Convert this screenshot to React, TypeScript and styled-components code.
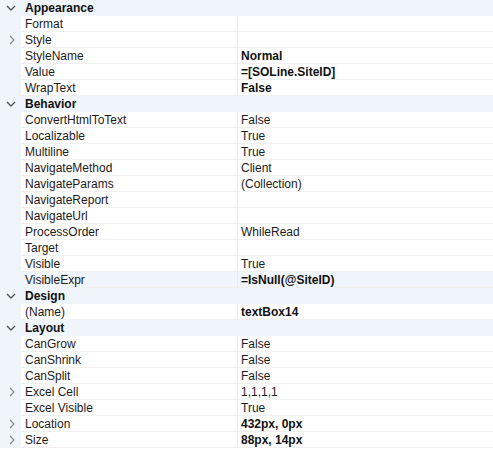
import styled, { createGlobalStyle } from "styled-components";

const GlobalStyle = createGlobalStyle`
  body {
    margin: 0;
    padding: 0;
    background: #ffffff;
    font-family: "Liberation Sans", Arial, sans-serif;
    font-size: 12px;
    color: #1b1b1b;
  }
`;

const Grid = styled.div`
  width: 493px;
  display: flex;
  flex-direction: column;
`;

const CategoryRow = styled.div`
  display: flex;
  align-items: center;
  height: 16px;
  background: #f0f4fb;
`;

const Gutter = styled.div`
  width: 21px;
  height: 16px;
  flex: none;
  display: flex;
  align-items: center;
  justify-content: center;
  background: #f0f4fb;
`;

const CategoryName = styled.div`
  padding-left: 4px;
  padding-top: 1px;
  font-weight: bold;
  line-height: 15px;
  color: #111;
`;

const PropRow = styled.div`
  display: flex;
  height: 16px;
`;

const Cell = styled.div<{ $selected?: boolean }>`
  box-sizing: border-box;
  height: 16px;
  padding-top: 1px;
  line-height: 14px;
  border-bottom: 1px solid #f0f0f0;
  white-space: nowrap;
  overflow: hidden;
  background: ${(p) => (p.$selected ? "#f0f4fb" : "#ffffff")};
`;

const NameCell = styled(Cell)`
  width: 217px;
  flex: none;
  padding-left: 4px;
  border-right: 1px solid #ebebeb;
`;

const ValueCell = styled(Cell)<{ $bold?: boolean }>`
  flex: 1;
  padding-left: 3px;
  font-weight: ${(p) => (p.$bold ? "bold" : "normal")};
  color: ${(p) => (p.$bold ? "#111" : "#1b1b1b")};
`;

const Down = () => (
  <svg width="10" height="6" viewBox="0 0 10 6">
    <path d="M1 1 L5 5 L9 1" fill="none" stroke="#555" strokeWidth="1.3" />
  </svg>
);

const Right = () => (
  <svg width="6" height="10" viewBox="0 0 6 10" style={{ marginLeft: 2 }}>
    <path d="M1 1 L5 5 L1 9" fill="none" stroke="#8a8a8a" strokeWidth="1.2" />
  </svg>
);

type Prop = {
  name: string;
  value?: string;
  bold?: boolean;
  expand?: boolean;
  selected?: boolean;
};

type Category = { title: string; props: Prop[] };

const data: Category[] = [
  {
    title: "Appearance",
    props: [
      { name: "Format" },
      { name: "Style", expand: true },
      { name: "StyleName", value: "Normal", bold: true },
      { name: "Value", value: "=[SOLine.SiteID]", bold: true },
      { name: "WrapText", value: "False", bold: true },
    ],
  },
  {
    title: "Behavior",
    props: [
      { name: "ConvertHtmlToText", value: "False" },
      { name: "Localizable", value: "True" },
      { name: "Multiline", value: "True" },
      { name: "NavigateMethod", value: "Client" },
      { name: "NavigateParams", value: "(Collection)" },
      { name: "NavigateReport" },
      { name: "NavigateUrl" },
      { name: "ProcessOrder", value: "WhileRead" },
      { name: "Target" },
      { name: "Visible", value: "True" },
      { name: "VisibleExpr", value: "=IsNull(@SiteID)", bold: true, selected: true },
    ],
  },
  {
    title: "Design",
    props: [{ name: "(Name)", value: "textBox14", bold: true }],
  },
  {
    title: "Layout",
    props: [
      { name: "CanGrow", value: "False" },
      { name: "CanShrink", value: "False" },
      { name: "CanSplit", value: "False" },
      { name: "Excel Cell", value: "1,1,1,1", expand: true },
      { name: "Excel Visible", value: "True" },
      { name: "Location", value: "432px, 0px", bold: true, expand: true },
      { name: "Size", value: "88px, 14px", bold: true, expand: true },
    ],
  },
];

export default function App() {
  return (
    <>
      <GlobalStyle />
      <Grid>
        {data.map((cat) => (
          <div key={cat.title}>
            <CategoryRow>
              <Gutter>
                <Down />
              </Gutter>
              <CategoryName>{cat.title}</CategoryName>
            </CategoryRow>
            {cat.props.map((p) => (
              <PropRow key={p.name}>
                <Gutter>{p.expand && <Right />}</Gutter>
                <NameCell $selected={p.selected}>{p.name}</NameCell>
                <ValueCell $bold={p.bold} $selected={p.selected}>
                  {p.value ?? ""}
                </ValueCell>
              </PropRow>
            ))}
          </div>
        ))}
      </Grid>
    </>
  );
}
